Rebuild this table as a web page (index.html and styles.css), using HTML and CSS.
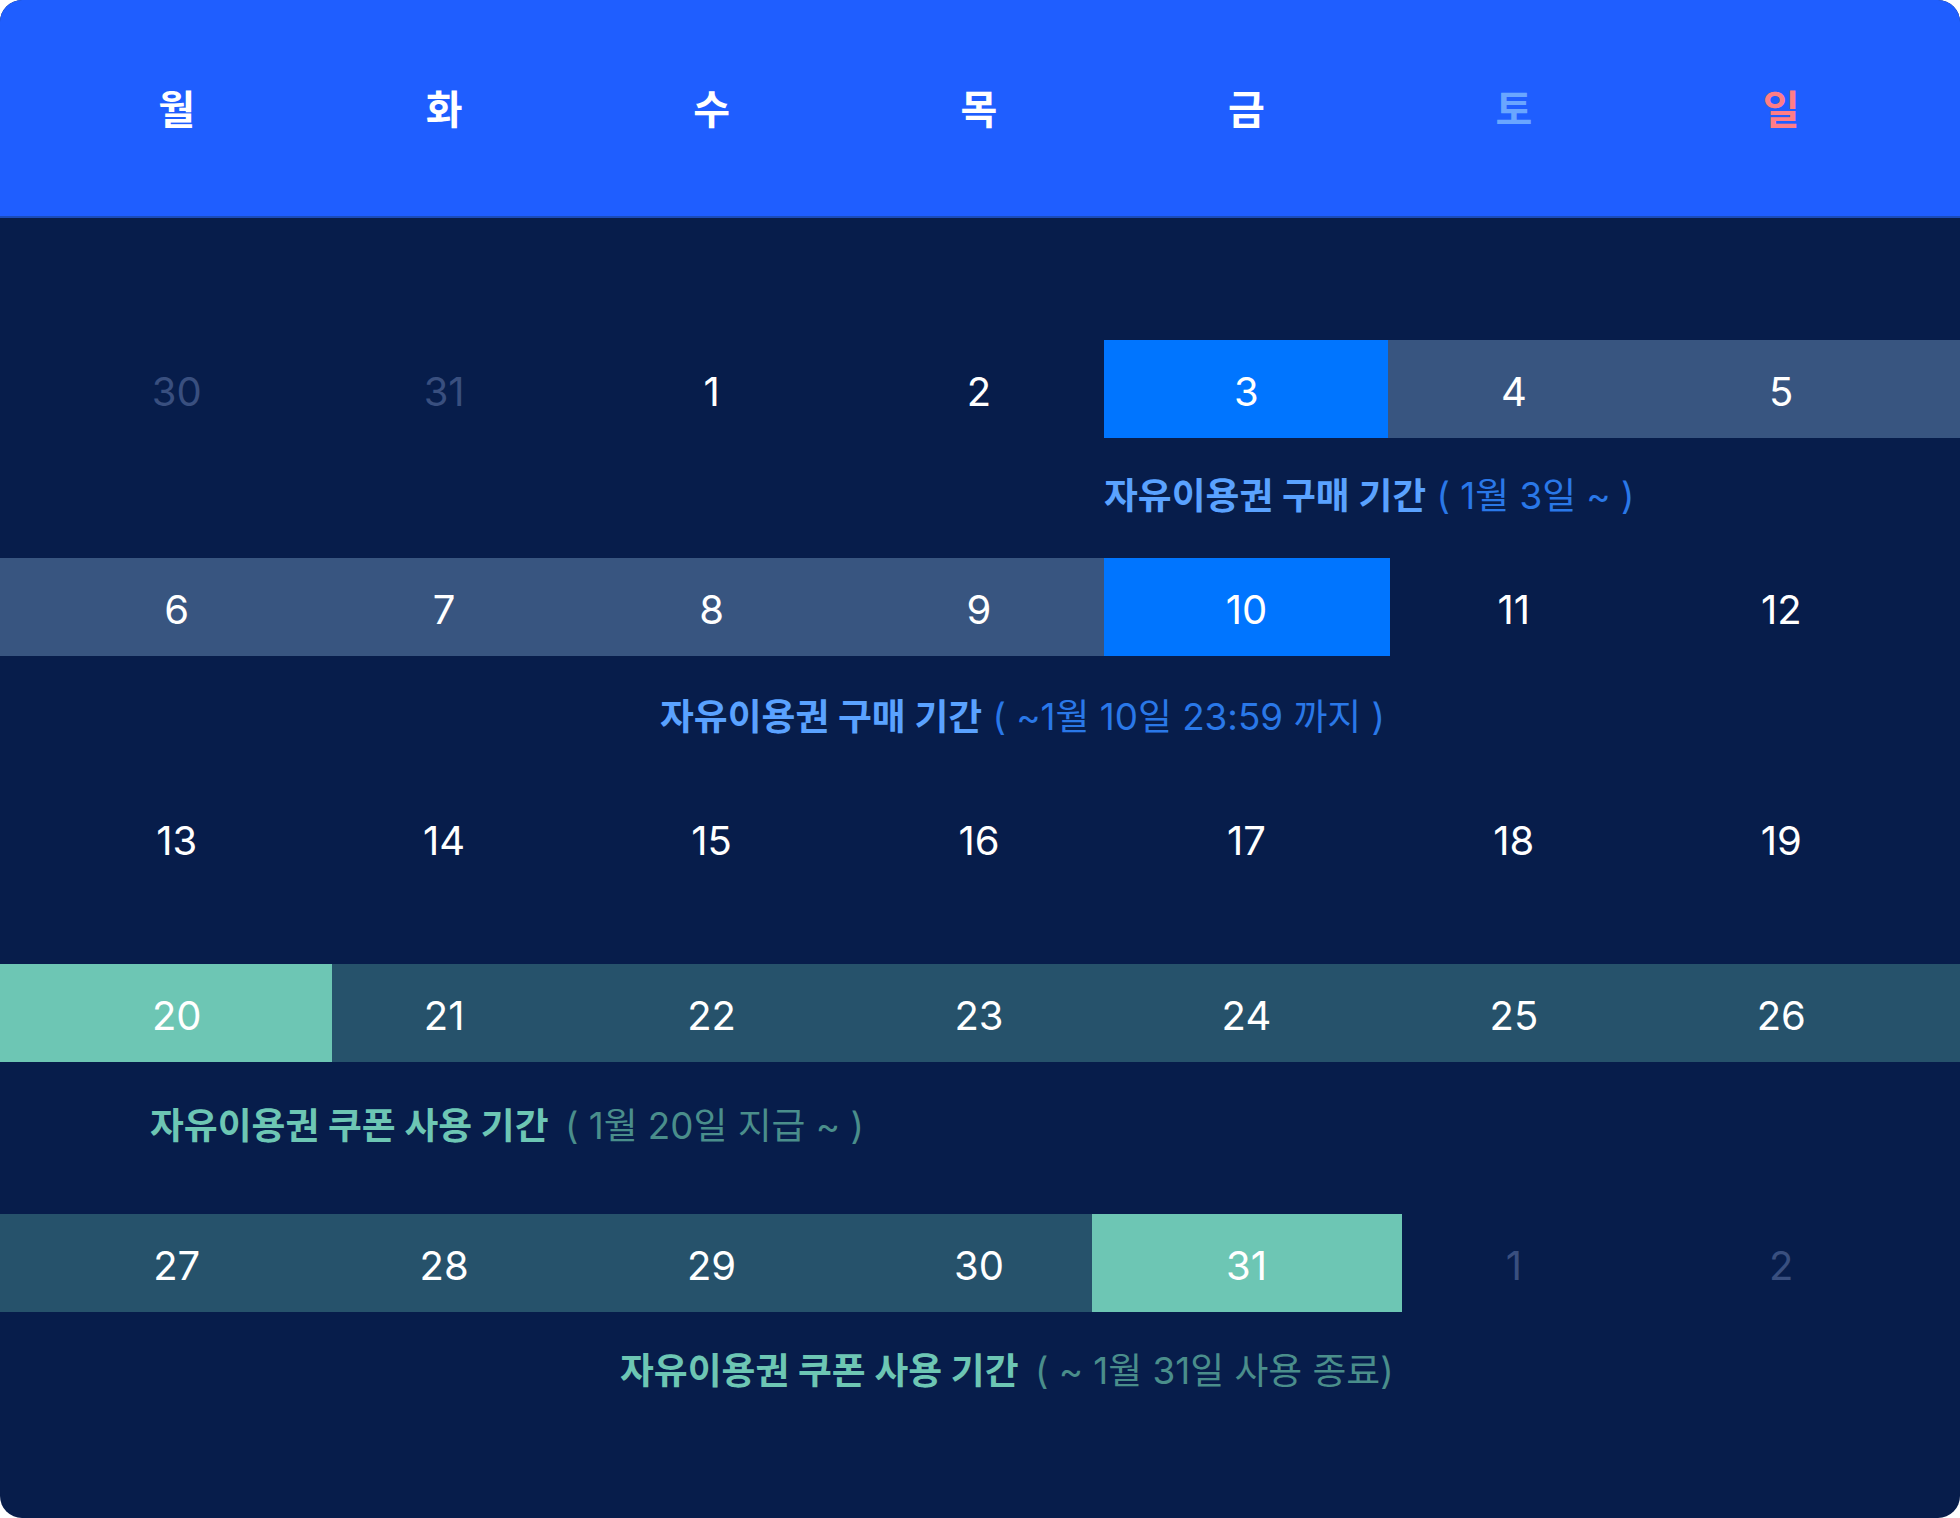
FILE: index.html
```html
<!DOCTYPE html>
<html lang="ko">
<head>
<meta charset="utf-8">
<title>자유이용권 캘린더</title>
<link rel="stylesheet" href="styles.css">
</head>
<body>
<div class="calendar">
  <div class="head">
    <div class="dow">월</div>
    <div class="dow">화</div>
    <div class="dow">수</div>
    <div class="dow">목</div>
    <div class="dow">금</div>
    <div class="dow sat">토</div>
    <div class="dow sun">일</div>
  </div>

  <div class="body">
    <div class="week week-1">
      <span class="band band-slate b1-band"></span>
      <span class="band band-blue b1-hi"></span>
      <div class="day muted">30</div>
      <div class="day muted">31</div>
      <div class="day">1</div>
      <div class="day">2</div>
      <div class="day">3</div>
      <div class="day">4</div>
      <div class="day">5</div>
    </div>
    <div class="label label-1 blue"><b>자유이용권 구매 기간</b> <span>( 1월 3일 ~ )</span></div>

    <div class="week week-2">
      <span class="band band-slate b2-band"></span>
      <span class="band band-blue b2-hi"></span>
      <div class="day">6</div>
      <div class="day">7</div>
      <div class="day">8</div>
      <div class="day">9</div>
      <div class="day">10</div>
      <div class="day">11</div>
      <div class="day">12</div>
    </div>
    <div class="label label-2 blue"><b>자유이용권 구매 기간</b> <span>( ~1월 10일 23:59 까지 )</span></div>

    <div class="week week-3">
      <div class="day">13</div>
      <div class="day">14</div>
      <div class="day">15</div>
      <div class="day">16</div>
      <div class="day">17</div>
      <div class="day">18</div>
      <div class="day">19</div>
    </div>

    <div class="week week-4">
      <span class="band band-teal b4-band"></span>
      <span class="band band-mint b4-hi"></span>
      <div class="day">20</div>
      <div class="day">21</div>
      <div class="day">22</div>
      <div class="day">23</div>
      <div class="day">24</div>
      <div class="day">25</div>
      <div class="day">26</div>
    </div>
    <div class="label label-3 teal"><b>자유이용권 쿠폰 사용 기간</b> <span class="wide">( 1월 20일 지급 ~ )</span></div>

    <div class="week week-5">
      <span class="band band-teal b5-band"></span>
      <span class="band band-mint b5-hi"></span>
      <div class="day">27</div>
      <div class="day">28</div>
      <div class="day">29</div>
      <div class="day">30</div>
      <div class="day">31</div>
      <div class="day muted">1</div>
      <div class="day muted">2</div>
    </div>
    <div class="label label-4 teal"><b>자유이용권 쿠폰 사용 기간</b> <span class="wide">( ~ 1월 31일 사용 종료)</span></div>
  </div>
</div>
</body>
</html>
```

FILE: styles.css
```css
* { box-sizing: border-box; }

html, body {
  margin: 0;
  padding: 0;
  background: #ffffff;
}

body {
  font-family: Inter, "Noto Sans CJK KR", sans-serif;
}

.calendar {
  width: 1960px;
  height: 1518px;
  border-radius: 22px;
  overflow: hidden;
  background: #071d4b;
  display: flex;
  flex-direction: column;
}

.head {
  height: 218px;
  flex: none;
  background: #1f5eff;
  border-bottom: 2px solid #1b4cb8;
  display: grid;
  grid-template-columns: repeat(7, 1fr);
  padding: 0 45px 0 43px;
  align-items: center;
}

.dow {
  text-align: center;
  font-family: "Noto Sans CJK KR", sans-serif;
  font-weight: 700;
  font-size: 40px;
  line-height: 48px;
  color: #ffffff;
  padding-bottom: 2px;
}
.dow.sat { color: #6aa6ff; }
.dow.sun { color: #ff7d86; }

.body {
  display: flex;
  flex-direction: column;
}

.week {
  display: grid;
  grid-template-columns: repeat(7, 1fr);
  grid-template-rows: 98px;
  padding: 0 45px 0 43px;
  align-items: center;
}

.day {
  grid-row: 1;
  text-align: center;
  font-size: 40px;
  line-height: 48px;
  padding-top: 5px;
  color: #ffffff;
  position: relative;
}
.day.muted { color: #394f7f; }

.day:nth-of-type(1) { grid-column: 1; }
.day:nth-of-type(2) { grid-column: 2; }
.day:nth-of-type(3) { grid-column: 3; }
.day:nth-of-type(4) { grid-column: 4; }
.day:nth-of-type(5) { grid-column: 5; }
.day:nth-of-type(6) { grid-column: 6; }
.day:nth-of-type(7) { grid-column: 7; }

.band {
  display: block;
  grid-row: 1;
  align-self: stretch;
}
.band-slate { background: #385580; }
.band-blue  { background: #0075ff; }
.band-teal  { background: #26526b; }
.band-mint  { background: #6dc6b4; }

/* week 1 : 3 highlighted, 4-5 range */
.week-1 { margin-top: 122px; }
.b1-band { grid-column: 6 / 8; margin-right: -45px; }
.b1-hi   { grid-column: 5 / 6; margin: 0 -8px 0 -9px; }

/* week 2 : 6-9 range, 10 highlighted */
.week-2 { margin-top: 40px; }
.b2-band { grid-column: 1 / 5; margin-left: -43px; }
.b2-hi   { grid-column: 5 / 6; margin: 0 -10px 0 -9px; }

.week-3 { margin-top: 50px; }

/* week 4 : 20 highlighted, 21-26 range */
.week-4 { margin-top: 77px; }
.b4-band { grid-column: 2 / 8; margin-right: -45px; }
.b4-hi   { grid-column: 1 / 2; margin: 0 -22px 0 -43px; }

/* week 5 : 27-30 range, 31 highlighted */
.week-5 { margin-top: 66px; }
.b5-band { grid-column: 1 / 5; margin-left: -43px; }
.b5-hi   { grid-column: 5 / 6; margin: 0 -22px 0 -21px; }

.label {
  font-size: 36.8px;
  line-height: 44px;
  white-space: nowrap;
}
.label b { font-weight: 700; }
.label span { font-weight: 400; }
.label span.wide { margin-left: 6px; }

.label.blue b { color: #5aa2ff; }
.label.blue span { color: #2a78e8; }
.label.teal b { color: #6dc6b4; }
.label.teal span { color: #4a8e8b; }

.label-1 { margin-top: 36px; padding-left: 1104px; }
.label-2 { margin-top: 39px; padding-left: 660px; }
.label-3 { margin-top: 42px; padding-left: 150px; }
.label-4 { margin-top: 37px; padding-left: 620px; }
```
